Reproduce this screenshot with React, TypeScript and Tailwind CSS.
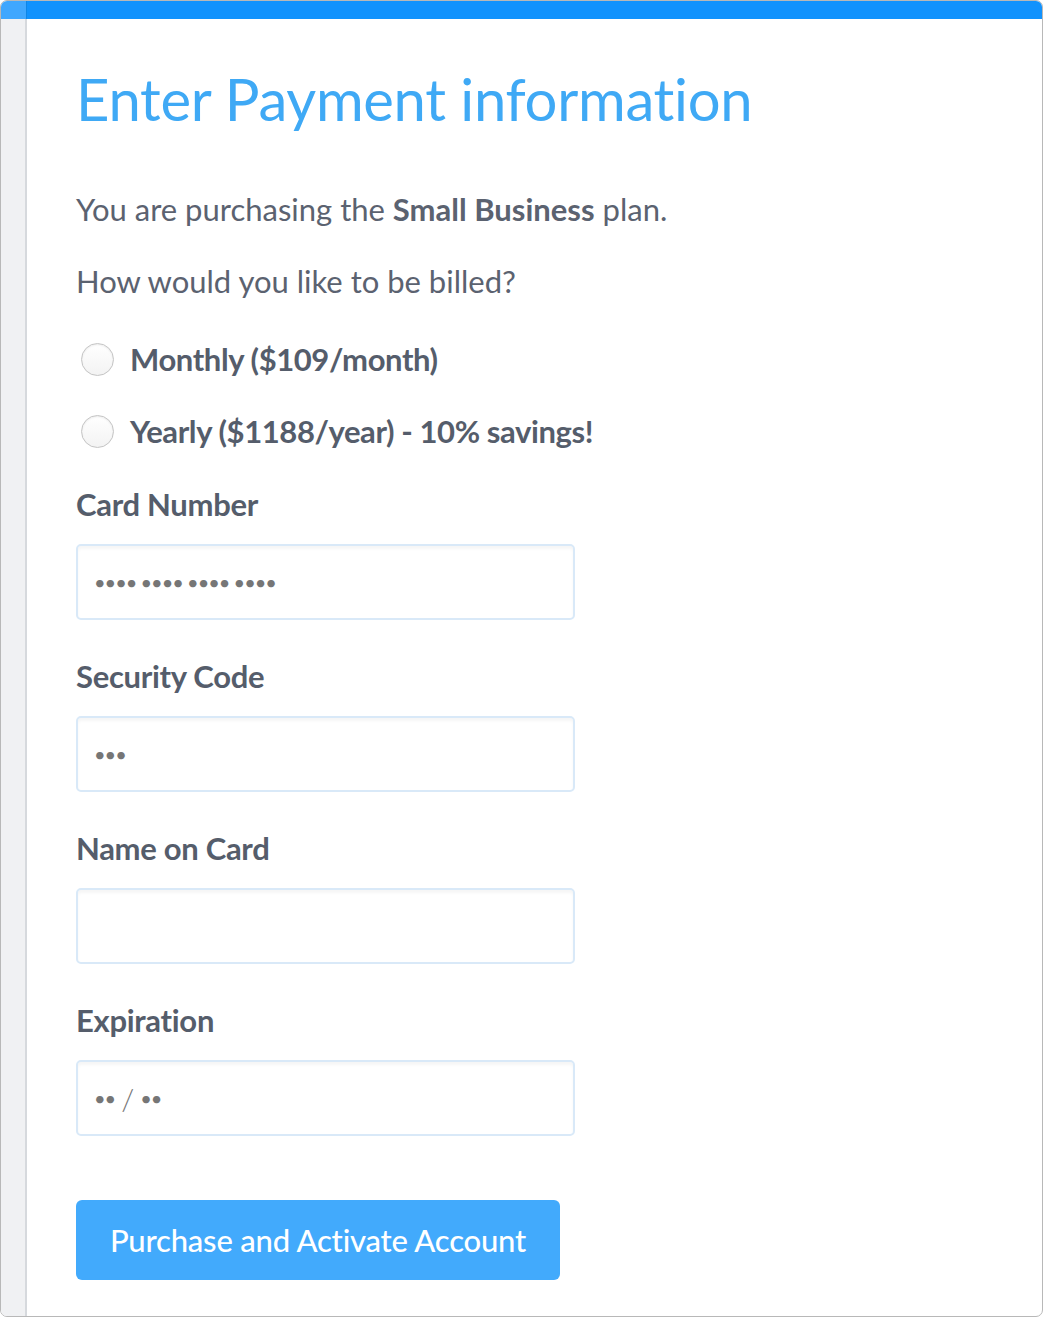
import React from "react";

const font = { fontFamily: "Lato, 'Open Sans', sans-serif" };

function Radio({ label }: { label: string }) {
  return (
    <label className="flex items-center h-[72px] pl-[5px]">
      <span className="w-[33px] h-[33px] rounded-full border border-[#c4c4c4] bg-gradient-to-b from-white to-[#f3f3f3] shadow-[inset_0_1px_2px_rgba(0,0,0,0.08)]" />
      <span className="ml-[16px] text-[31px] font-bold text-[#555d6b] tracking-[-0.4px]">
        {label}
      </span>
    </label>
  );
}

function Field({ label, children }: { label: string; children?: React.ReactNode }) {
  return (
    <div className="flex flex-col">
      <div className="h-[80px] flex items-center text-[31px] font-bold text-[#555d6b] tracking-[-0.3px]">
        {label}
      </div>
      <div className="w-[499px] h-[76px] rounded-[5px] border-2 border-[#d9e9f8] bg-white shadow-[inset_0_3px_3px_rgba(0,0,0,0.04)] flex items-center px-[16px] text-[20px] text-[#767676] tracking-[-1px]">
        {children}
      </div>
    </div>
  );
}

export default function App() {
  return (
    <div className="w-[1044px] h-[1318px] bg-white" style={font}>
      <div className="w-[1043px] h-[1317px] rounded-[7px] border border-[#b8b8b8] overflow-hidden flex flex-col">
        <div className="h-[18px] flex shrink-0">
          <div className="w-[26px] bg-[#40a7fe] border-r border-[#0f86e6]" />
          <div className="flex-1 bg-[#1192fd]" />
        </div>
        <div className="flex flex-1">
          <div className="w-[26px] bg-[#f0f1f3] border-r-2 border-[#d6d9dd] shrink-0" />
          <div className="flex-1 pl-[49px] flex flex-col">
            <h1 className="mt-[44px] text-[58px] leading-[72px] text-[#3fa9f5] tracking-[-0.3px]">
              Enter Payment information
            </h1>
            <p className="mt-[54px] text-[31px] leading-[40px] text-[#5b6270]">
              You are purchasing the <span className="font-bold">Small Business</span> plan.
            </p>
            <p className="mt-[32px] text-[31px] leading-[40px] text-[#5b6270]">
              How would you like to be billed?
            </p>
            <div className="mt-[22px] flex flex-col">
              <Radio label="Monthly ($109/month)" />
              <Radio label="Yearly ($1188/year) - 10% savings!" />
            </div>
            <div className="flex flex-col gap-[16px] -mt-[3px]">
              <Field label="Card Number">•••• •••• •••• ••••</Field>
              <Field label="Security Code">•••</Field>
              <Field label="Name on Card" />
              <Field label="Expiration">
                ••<span className="mx-[6px] text-[30px] font-light tracking-normal">/</span>••
              </Field>
            </div>
            <button className="mt-[64px] w-[484px] h-[80px] rounded-[6px] bg-[#42aafc] text-white text-[31px] font-medium tracking-[-0.2px] self-start">
              Purchase and Activate Account
            </button>
          </div>
        </div>
      </div>
    </div>
  );
}
